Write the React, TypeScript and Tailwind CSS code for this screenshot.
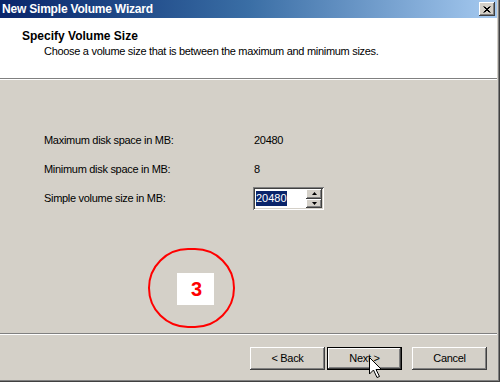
import React from "react";

const bevel =
  "bg-[#d4d0c8] shadow-[inset_-1px_-1px_#404040,inset_1px_1px_#ffffff,inset_-2px_-2px_#808080,inset_2px_2px_#d4d0c8]";

function Btn({ children, def }: { children: React.ReactNode; def?: boolean }) {
  if (def) {
    return (
      <div className="w-[75px] h-[23px] border border-black">
        <div className={`w-full h-full flex items-center justify-center ${bevel}`}>{children}</div>
      </div>
    );
  }
  return <div className={`w-[75px] h-[23px] flex items-center justify-center ${bevel}`}>{children}</div>;
}

export default function App() {
  return (
    <div
      className="relative w-[500px] h-[382px] overflow-hidden text-[11px] leading-[13px] tracking-[-0.3px] text-black"
      style={{ fontFamily: '"Liberation Sans", Arial, sans-serif' }}
    >
      <div className="w-full h-full flex flex-col bg-[#d4d0c8] pr-[3px] pb-[2px] shadow-[inset_-1px_-1px_#404040,inset_-2px_-2px_#808080]">
        {/* title bar */}
        <div className="h-[18px] flex items-center justify-between pl-[2px] pr-[2px] bg-linear-to-r from-[#0a246a] via-[#3a6ea5] to-[#a6caf0]">
          <span className="text-white font-bold text-[12px] leading-[18px] tracking-[-0.2px]">New Simple Volume Wizard</span>
          <div className={`w-[16px] h-[14px] flex items-center justify-center ${bevel}`}>
            <svg width="8" height="7" viewBox="0 0 8 7">
              <path d="M0.5 0.5 L6.5 6.5 M1.5 0.5 L7.5 6.5 M6.5 0.5 L0.5 6.5 M7.5 0.5 L1.5 6.5" stroke="black" strokeWidth="1" />
            </svg>
          </div>
        </div>
        {/* header */}
        <div className="h-[60px] bg-white pl-[22px] pt-[11px]">
          <div className="font-bold text-[12px] leading-[14px] tracking-normal">Specify Volume Size</div>
          <div className="pl-[22px] leading-[14px] pt-px">Choose a volume size that is between the maximum and minimum sizes.</div>
        </div>
        <div className="h-px bg-[#808080]" />
        <div className="h-px bg-white" />
        {/* content */}
        <div className="flex-1 pt-[46px] pl-[44px]">
          <div className="grid grid-cols-[209px_1fr] auto-rows-[29px] items-center">
            <div>Maximum disk space in MB:</div>
            <div className="pl-px">20480</div>
            <div>Minimum disk space in MB:</div>
            <div className="pl-px">8</div>
            <div>Simple volume size in MB:</div>
            <div className="w-[71px] h-[23px] p-[2px] bg-white flex shadow-[inset_1px_1px_#808080,inset_-1px_-1px_#ffffff,inset_2px_2px_#404040,inset_-2px_-2px_#d4d0c8]">
              <div className="flex-1 flex items-center pl-px">
                <span className="bg-[#0a246a] text-white h-[15px] leading-[15px] tracking-normal">20480</span>
              </div>
              <div className="w-[16px] flex flex-col">
                <div className={`flex-1 flex items-center justify-center ${bevel}`}>
                  <svg width="5" height="3" viewBox="0 0 5 3">
                    <path d="M2.5 0 L5 3 L0 3 Z" fill="black" />
                  </svg>
                </div>
                <div className={`flex-1 flex items-center justify-center ${bevel}`}>
                  <svg width="5" height="3" viewBox="0 0 5 3">
                    <path d="M0 0 L5 0 L2.5 3 Z" fill="black" />
                  </svg>
                </div>
              </div>
            </div>
          </div>
        </div>
        <div className="h-px bg-[#808080]" />
        <div className="h-px bg-white" />
        {/* footer */}
        <div className="h-[45px] flex justify-end items-start pt-[12px] pr-[10px]">
          <Btn>&lt; Back</Btn>
          <div className="ml-[2px]">
            <Btn def>Next &gt;</Btn>
          </div>
          <div className="ml-[10px]">
            <Btn>Cancel</Btn>
          </div>
        </div>
      </div>

      {/* annotation */}
      <div className="absolute left-[148px] top-[248px] w-[87px] h-[80px] rounded-full border-2 border-[#ff0000]" />
      <div className="absolute left-[177px] top-[273px] w-[37px] h-[32px] bg-white flex items-center justify-center">
        <span className="text-[#ff0000] font-bold text-[20px] leading-[20px] pl-[2px] tracking-normal">3</span>
      </div>

      {/* mouse cursor */}
      <svg className="absolute left-[369px] top-[357px]" width="14" height="22" viewBox="0 0 14 22">
        <polygon
          points="0.5,0.5 0.5,17 4.5,13 8,20.5 10.5,19.5 7,12.5 12.5,12.5"
          fill="white"
          stroke="black"
          strokeWidth="1"
        />
      </svg>
    </div>
  );
}
